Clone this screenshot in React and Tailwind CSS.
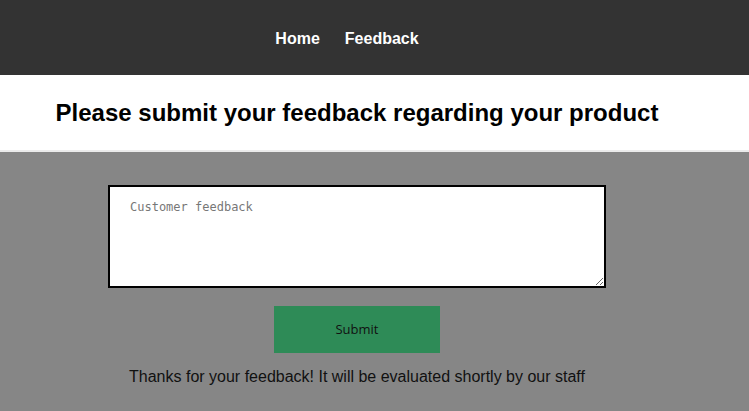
export default function App() {
  return (
    <div className="min-h-[411px] bg-[#868686] font-['Liberation_Sans',Arial,sans-serif]">
      <header className="h-[75px] bg-[#333333] pr-[35px]">
        <nav className="flex h-full items-center justify-center gap-[25px] pr-[20px] pt-[3px]">
          <a className="text-[16px] font-bold text-white">Home</a>
          <a className="text-[16px] font-bold text-white">Feedback</a>
        </nav>
      </header>

      <div className="flex h-[77px] items-center justify-center border-b-[2px] border-[#ebebeb] bg-white pr-[35px] pt-[1px]">
        <h1 className="text-[24px] font-bold text-black">Please submit your feedback regarding your product</h1>
      </div>

      <main className="flex flex-col items-center pt-[33px] pr-[35px]">
        <textarea
          placeholder="Customer feedback"
          className="h-[103px] w-[498px] resize border-[2px] border-black bg-white px-[20px] pt-[11px] pb-[10px] font-['DejaVu_Sans_Mono',monospace] text-[12px] placeholder:text-[#777]"
        />
        <button className="mt-[18px] h-[47px] w-[166px] bg-[#2e8b57] font-['Open_Sans',sans-serif] text-[13px] text-[#111]">
          Submit
        </button>
        <p className="mt-[12px] text-[16px] text-[#111]">Thanks for your feedback! It will be evaluated shortly by our staff</p>
      </main>
    </div>
  )
}
